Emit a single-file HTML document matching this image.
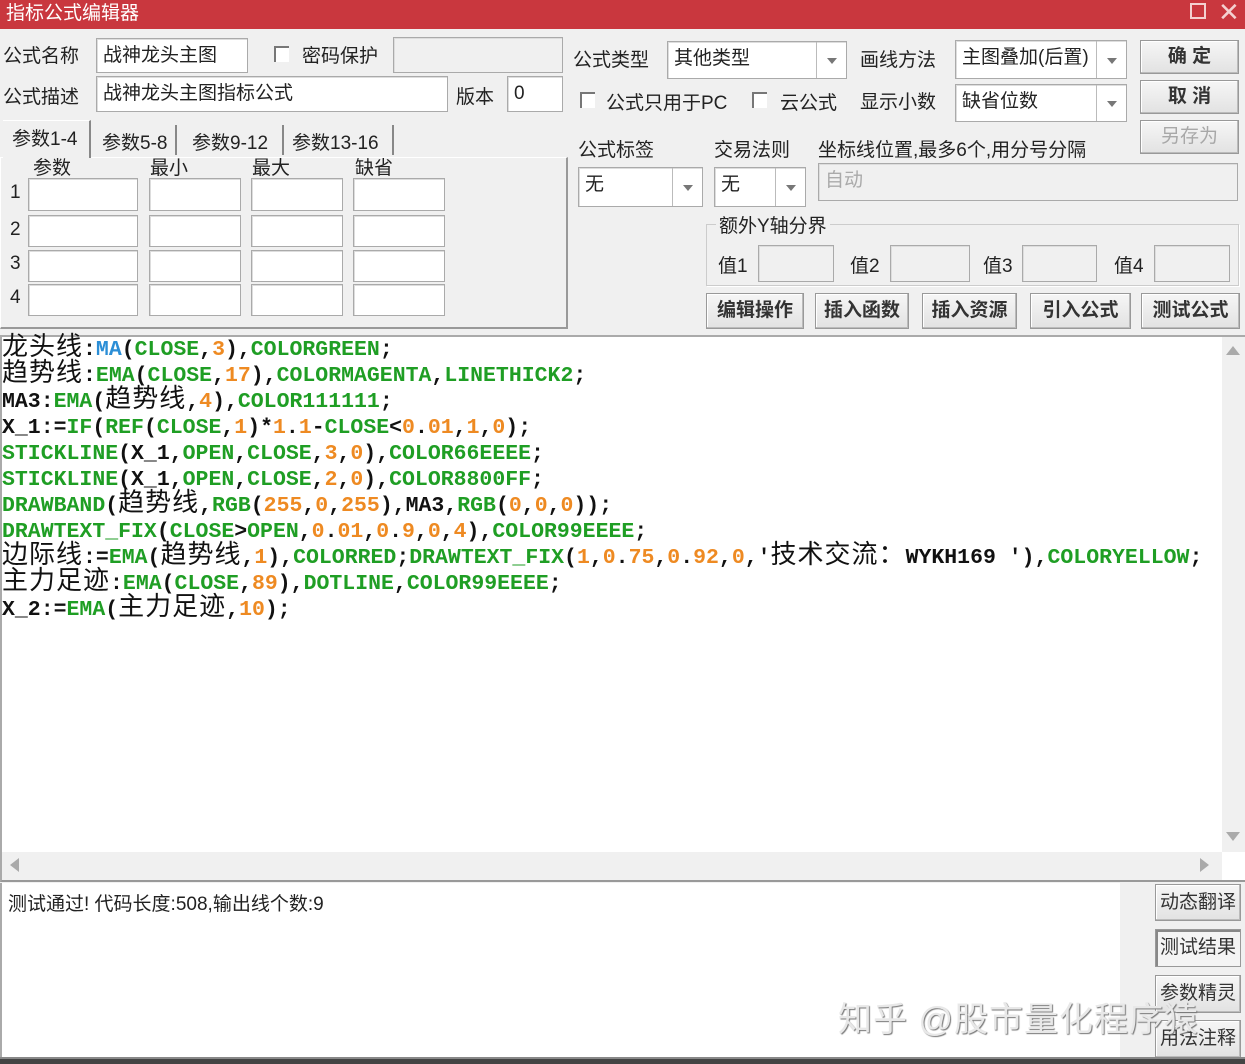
<!DOCTYPE html>
<html><head><meta charset="utf-8"><style>
*{box-sizing:border-box;margin:0;padding:0}
body{width:1245px;height:1064px;background:#f0f0f0;font-family:"Liberation Sans","Noto Sans CJK SC",sans-serif;font-size:19px;color:#222;position:relative;overflow:hidden}
.a{position:absolute;white-space:nowrap}
.in{position:absolute;background:#fff;border:1px solid #aaa;box-shadow:inset 1px 1px 0 #ddd;padding:4px 6px;font-size:19px;line-height:26px}
.g{background:#f0f0f0}
.btn{position:absolute;background:linear-gradient(#f6f6f6,#e2e2e2);border:1px solid #999;box-shadow:inset -1px -1px 0 #bbb,inset 1px 1px 0 #fff;text-align:center;font-size:19px;font-weight:bold;color:#333}
.cb{position:absolute;width:15px;height:16px;border-left:2px solid #777;border-top:2px solid #777;background:#fff}
.dd{position:absolute;top:0;right:0;bottom:0;width:30px;border-left:1px solid #bbb}
.dd:after{content:"";position:absolute;left:10px;top:50%;margin-top:-2px;border:5px solid transparent;border-top:6px solid #777;border-bottom:0}
.code{position:absolute;left:2px;top:337px;font-family:"Liberation Mono",monospace;font-weight:bold;font-size:21.5px;color:#111}
.code div{height:26px;line-height:26px;white-space:pre;overflow:visible}
.c{font-family:"Noto Sans CJK SC",sans-serif;font-weight:normal;font-size:26px;letter-spacing:1px;line-height:0}
.G{color:#1f9e24}.O{color:#ee8a22}.B{color:#2b8ed6}
</style></head><body>
<div class="a" style="left:0;top:0;width:1245px;height:29px;background:#c9373e"></div>
<div class="a" style="left:6px;top:1px;color:#fff;font-size:19px;line-height:26px">指标公式编辑器</div>
<div class="a" style="left:1190px;top:3px;width:16px;height:16px;border:2px solid #f4d0d0"></div>
<div class="a" style="left:1218px;top:-3px;color:#f4d0d0;font-size:26px">✕</div>

<div class="a" style="left:3px;top:41px">公式名称</div>
<div class="in" style="left:96px;top:38px;width:152px;height:35px">战神龙头主图</div>
<div class="cb" style="left:274px;top:46px"></div>
<div class="a" style="left:302px;top:41px">密码保护</div>
<div class="in g" style="left:393px;top:37px;width:170px;height:36px"></div>
<div class="a" style="left:3px;top:82px">公式描述</div>
<div class="in" style="left:96px;top:76px;width:352px;height:36px">战神龙头主图指标公式</div>
<div class="a" style="left:456px;top:82px">版本</div>
<div class="in" style="left:507px;top:76px;width:56px;height:36px">0</div>

<div class="a" style="left:573px;top:45px">公式类型</div>
<div class="in" style="left:667px;top:41px;width:180px;height:38px">其他类型<div class="dd"></div></div>
<div class="a" style="left:860px;top:45px">画线方法</div>
<div class="in" style="left:955px;top:40px;width:172px;height:39px">主图叠加(后置)<div class="dd"></div></div>
<div class="btn" style="left:1140px;top:40px;width:99px;height:34px;line-height:32px">确 定</div>
<div class="cb" style="left:580px;top:92px"></div>
<div class="a" style="left:606px;top:88px">公式只用于PC</div>
<div class="cb" style="left:752px;top:92px"></div>
<div class="a" style="left:780px;top:88px">云公式</div>
<div class="a" style="left:860px;top:87px">显示小数</div>
<div class="in" style="left:955px;top:84px;width:172px;height:38px">缺省位数<div class="dd"></div></div>
<div class="btn" style="left:1140px;top:80px;width:99px;height:34px;line-height:32px">取 消</div>
<div class="btn" style="left:1140px;top:120px;width:99px;height:34px;line-height:32px;color:#a8a8a8;font-weight:normal">另存为</div>

<div class="a" style="left:0;top:157px;width:568px;height:172px;border:1px solid #fff;border-right:2px solid #999;border-bottom:2px solid #999"></div>
<div class="a" style="left:3px;top:120px;width:88px;height:38px;background:#f0f0f0;border-right:2px solid #888;border-top:1px solid #fff"></div>
<div class="a" style="left:12px;top:124px">参数1-4</div>
<div class="a" style="left:102px;top:128px">参数5-8</div>
<div class="a" style="left:175px;top:125px;height:30px;border-left:2px solid #888"></div>
<div class="a" style="left:192px;top:128px">参数9-12</div>
<div class="a" style="left:282px;top:125px;height:30px;border-left:2px solid #888"></div>
<div class="a" style="left:292px;top:128px">参数13-16</div>
<div class="a" style="left:392px;top:125px;height:30px;border-left:2px solid #888"></div>
<div class="a" style="left:33px;top:153px">参数</div>
<div class="a" style="left:150px;top:153px">最小</div>
<div class="a" style="left:252px;top:153px">最大</div>
<div class="a" style="left:355px;top:153px">缺省</div>
<div class="a" style="left:10px;top:182px">1</div><div class="a" style="left:10px;top:219px">2</div><div class="a" style="left:10px;top:253px">3</div><div class="a" style="left:10px;top:287px">4</div>
<div class="in" style="left:28px;top:178px;width:110px;height:33px"></div><div class="in" style="left:149px;top:178px;width:92px;height:33px"></div><div class="in" style="left:251px;top:178px;width:92px;height:33px"></div><div class="in" style="left:353px;top:178px;width:92px;height:33px"></div>
<div class="in" style="left:28px;top:215px;width:110px;height:32px"></div><div class="in" style="left:149px;top:215px;width:92px;height:32px"></div><div class="in" style="left:251px;top:215px;width:92px;height:32px"></div><div class="in" style="left:353px;top:215px;width:92px;height:32px"></div>
<div class="in" style="left:28px;top:250px;width:110px;height:32px"></div><div class="in" style="left:149px;top:250px;width:92px;height:32px"></div><div class="in" style="left:251px;top:250px;width:92px;height:32px"></div><div class="in" style="left:353px;top:250px;width:92px;height:32px"></div>
<div class="in" style="left:28px;top:284px;width:110px;height:32px"></div><div class="in" style="left:149px;top:284px;width:92px;height:32px"></div><div class="in" style="left:251px;top:284px;width:92px;height:32px"></div><div class="in" style="left:353px;top:284px;width:92px;height:32px"></div>

<div class="a" style="left:578px;top:135px">公式标签</div>
<div class="a" style="left:714px;top:135px">交易法则</div>
<div class="a" style="left:818px;top:135px">坐标线位置,最多6个,用分号分隔</div>
<div class="in" style="left:578px;top:167px;width:125px;height:40px">无<div class="dd"></div></div>
<div class="in" style="left:714px;top:167px;width:92px;height:40px">无<div class="dd"></div></div>
<div class="in g" style="left:818px;top:163px;width:420px;height:38px;color:#aaa">自动</div>
<div class="a" style="left:706px;top:224px;width:533px;height:62px;border:1px solid #ccc;box-shadow:1px 1px 0 #fff"></div>
<div class="a" style="left:716px;top:211px;background:#f0f0f0;padding:0 3px">额外Y轴分界</div>
<div class="a" style="left:718px;top:251px">值1</div><div class="in g" style="left:758px;top:245px;width:76px;height:37px"></div>
<div class="a" style="left:850px;top:251px">值2</div><div class="in g" style="left:890px;top:245px;width:80px;height:37px"></div>
<div class="a" style="left:983px;top:251px">值3</div><div class="in g" style="left:1022px;top:245px;width:75px;height:37px"></div>
<div class="a" style="left:1114px;top:251px">值4</div><div class="in g" style="left:1154px;top:245px;width:76px;height:37px"></div>
<div class="btn" style="left:706px;top:293px;width:98px;height:36px;line-height:34px">编辑操作</div>
<div class="btn" style="left:815px;top:293px;width:94px;height:36px;line-height:34px">插入函数</div>
<div class="btn" style="left:922px;top:293px;width:95px;height:36px;line-height:34px">插入资源</div>
<div class="btn" style="left:1030px;top:293px;width:101px;height:36px;line-height:34px">引入公式</div>
<div class="btn" style="left:1141px;top:293px;width:99px;height:36px;line-height:34px">测试公式</div>

<div class="a" style="left:0;top:335px;width:1245px;height:547px;background:#fff;border-top:2px solid #aaa;border-left:2px solid #aaa;border-bottom:2px solid #999"></div>
<div class="a" style="left:1222px;top:337px;width:23px;height:515px;background:#f0f0f0"></div>
<div class="a" style="left:1226px;top:346px;border:7px solid transparent;border-bottom:9px solid #aaa;border-top:0"></div>
<div class="a" style="left:1226px;top:832px;border:7px solid transparent;border-top:9px solid #aaa;border-bottom:0"></div>
<div class="a" style="left:2px;top:852px;width:1220px;height:28px;background:#f0f0f0"></div>
<div class="a" style="left:10px;top:858px;border:7px solid transparent;border-right:9px solid #aaa;border-left:0"></div>
<div class="a" style="left:1200px;top:858px;border:7px solid transparent;border-left:9px solid #aaa;border-right:0"></div>
<div class="code">
<div><span class="c">龙头线</span>:<span class="B">MA</span>(<span class="G">CLOSE</span>,<span class="O">3</span>),<span class="G">COLORGREEN</span>;</div>
<div><span class="c">趋势线</span>:<span class="G">EMA</span>(<span class="G">CLOSE</span>,<span class="O">17</span>),<span class="G">COLORMAGENTA</span>,<span class="G">LINETHICK2</span>;</div>
<div>MA3:<span class="G">EMA</span>(<span class="c">趋势线</span>,<span class="O">4</span>),<span class="G">COLOR111111</span>;</div>
<div>X_1:=<span class="G">IF</span>(<span class="G">REF</span>(<span class="G">CLOSE</span>,<span class="O">1</span>)*<span class="O">1</span>.<span class="O">1</span>-<span class="G">CLOSE</span>&lt;<span class="O">0</span>.<span class="O">01</span>,<span class="O">1</span>,<span class="O">0</span>);</div>
<div><span class="G">STICKLINE</span>(X_1,<span class="G">OPEN</span>,<span class="G">CLOSE</span>,<span class="O">3</span>,<span class="O">0</span>),<span class="G">COLOR66EEEE</span>;</div>
<div><span class="G">STICKLINE</span>(X_1,<span class="G">OPEN</span>,<span class="G">CLOSE</span>,<span class="O">2</span>,<span class="O">0</span>),<span class="G">COLOR8800FF</span>;</div>
<div><span class="G">DRAWBAND</span>(<span class="c">趋势线</span>,<span class="G">RGB</span>(<span class="O">255</span>,<span class="O">0</span>,<span class="O">255</span>),MA3,<span class="G">RGB</span>(<span class="O">0</span>,<span class="O">0</span>,<span class="O">0</span>));</div>
<div><span class="G">DRAWTEXT_FIX</span>(<span class="G">CLOSE</span>&gt;<span class="G">OPEN</span>,<span class="O">0</span>.<span class="O">01</span>,<span class="O">0</span>.<span class="O">9</span>,<span class="O">0</span>,<span class="O">4</span>),<span class="G">COLOR99EEEE</span>;</div>
<div><span class="c">边际线</span>:=<span class="G">EMA</span>(<span class="c">趋势线</span>,<span class="O">1</span>),<span class="G">COLORRED</span>;<span class="G">DRAWTEXT_FIX</span>(<span class="O">1</span>,<span class="O">0</span>.<span class="O">75</span>,<span class="O">0</span>.<span class="O">92</span>,<span class="O">0</span>,'<span class="c">技术交流：</span>WYKH169 '),<span class="G">COLORYELLOW</span>;</div>
<div><span class="c">主力足迹</span>:<span class="G">EMA</span>(<span class="G">CLOSE</span>,<span class="O">89</span>),<span class="G">DOTLINE</span>,<span class="G">COLOR99EEEE</span>;</div>
<div>X_2:=<span class="G">EMA</span>(<span class="c">主力足迹</span>,<span class="O">10</span>);</div>
</div>

<div class="a" style="left:0;top:883px;width:1150px;height:174px;background:#fff;border-left:2px solid #aaa"></div>
<div class="a" style="left:8px;top:889px">测试通过! 代码长度:508,输出线个数:9</div>
<div class="a" style="left:1120px;top:883px;width:30px;height:174px;background:#f0f0f0"></div>
<div class="btn" style="left:1155px;top:884px;width:86px;height:37px;line-height:35px;font-weight:normal">动态翻译</div>
<div class="btn" style="left:1155px;top:929px;width:86px;height:38px;line-height:36px;font-weight:normal;background:#f4f4f4;box-shadow:inset 2px 2px 0 #888">测试结果</div>
<div class="btn" style="left:1155px;top:975px;width:86px;height:38px;line-height:36px;font-weight:normal">参数精灵</div>
<div class="btn" style="left:1155px;top:1020px;width:86px;height:38px;line-height:36px;font-weight:normal">用法注释</div>
<div class="a" style="left:838px;top:992px;font-size:34px;color:#e8e8e8;text-shadow:1px 1px 1px #777;letter-spacing:1px">知乎 @股市量化程序猿</div>
<div class="a" style="left:0;top:1057px;width:1245px;height:7px;background:#444;border-top:2px solid #888"></div>
</body></html>
